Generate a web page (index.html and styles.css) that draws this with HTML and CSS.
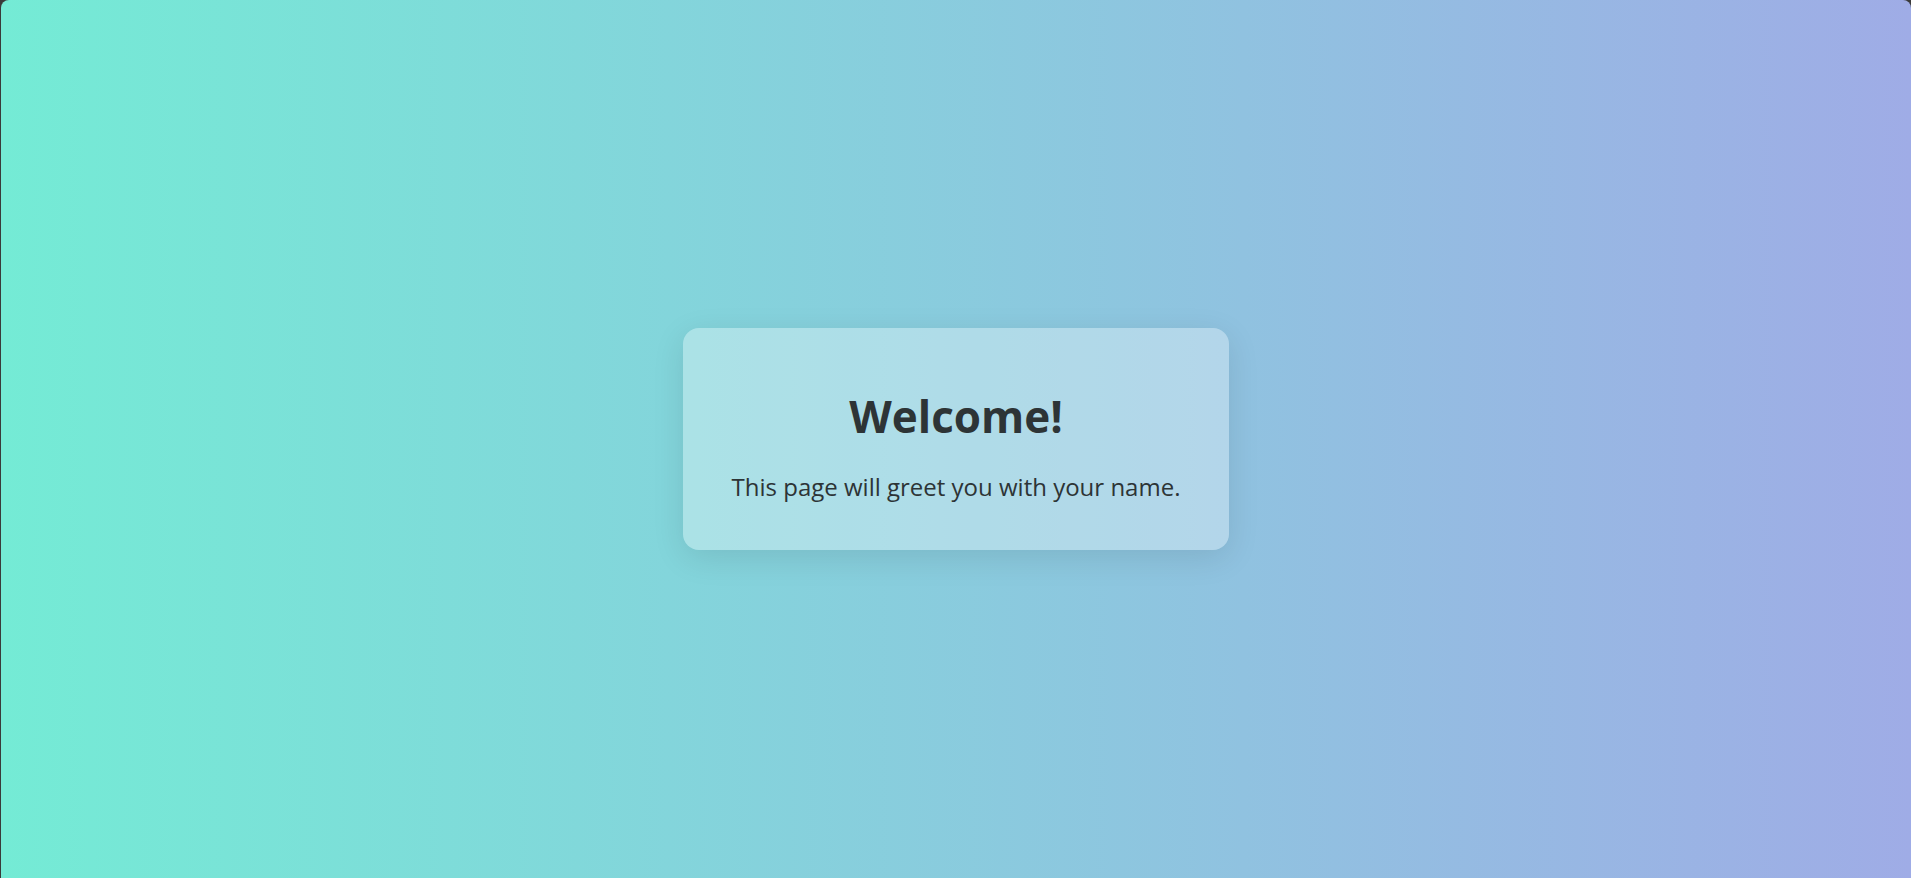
FILE: index.html
```html
<!DOCTYPE html>
<html lang="en">
<head>
<meta charset="utf-8">
<title>Welcome</title>
<link rel="stylesheet" href="styles.css">
</head>
<body>
<main class="frame">
  <section class="card">
    <h1 class="card-title">Welcome!</h1>
    <p class="card-text">This page will greet you with your name.</p>
  </section>
</main>
</body>
</html>
```

FILE: styles.css
```css
html, body {
  margin: 0;
  height: 100%;
  background: #3a3a3a;
}

.frame {
  box-sizing: border-box;
  height: 100vh;
  margin-left: 1px;
  border-radius: 8px 8px 0 0;
  background: linear-gradient(to right, #74ebd5, #9face6);
  display: flex;
  align-items: center;
  justify-content: center;
  font-family: "Open Sans", "Noto Sans", sans-serif;
  color: #2d3436;
}

.card {
  box-sizing: border-box;
  width: 546px;
  padding: 62px 40px 47px;
  border-radius: 16px;
  background: rgba(255, 255, 255, 0.32);
  box-shadow: 0 8px 32px rgba(0, 0, 0, 0.1);
  text-align: center;
}

.card-title {
  margin: 0 0 27px;
  font-size: 44px;
  font-weight: 700;
  line-height: 52.8px;
}

.card-text {
  margin: 0;
  font-size: 24px;
  line-height: 33.6px;
}
```
